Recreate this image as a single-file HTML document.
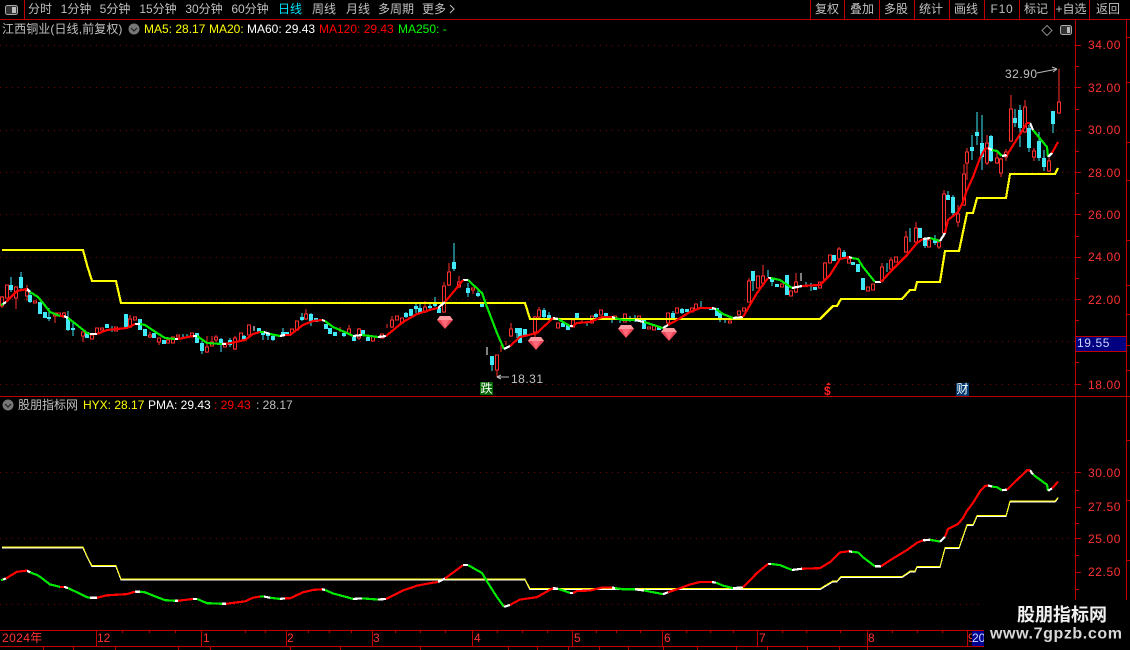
<!DOCTYPE html>
<html><head><meta charset="utf-8"><style>
html,body{margin:0;padding:0;background:#000;width:1130px;height:650px;overflow:hidden}
svg{display:block}
text{font-family:"Liberation Sans","WenQuanYi Zen Hei","Noto Sans CJK SC",sans-serif;font-size:12px;dominant-baseline:central}
.t text{fill:#c0c0c0;text-anchor:middle}
.a text{fill:#ff3333;letter-spacing:.6px;text-anchor:end}
.x text{fill:#ff3333}
.g{stroke:#7a0000;stroke-width:1;stroke-dasharray:1 5;fill:none}
.r{stroke:#ff0000;stroke-width:2.2;fill:none}.gn{stroke:#00e800;stroke-width:2.2;fill:none}.w{stroke:#fff;stroke-width:2.2;fill:none}
</style></head><body>
<svg width="1130" height="650" viewBox="0 0 1130 650" xmlns="http://www.w3.org/2000/svg">
<rect width="1130" height="650" fill="#000"/>
<!-- frame -->
<g stroke="#c00000" stroke-width="1" fill="none" shape-rendering="crispEdges">
<path d="M0 19.5H1130M0 396.5H1130M0 630.5H984M0 646.5H984M24.5 0V19M1075.5 19V600M1126.5 19V600"/>
<path d="M810.5 0V19M844.5 0V19M879.5 0V19M914.5 0V19M949.5 0V19M984.5 0V19M1019.5 0V19M1054.5 0V19M1089.5 0V19"/>
<path d="M1076 45.5h5M1076 87.5h5M1076 130.5h5M1076 172.5h5M1076 214.5h5M1076 257.5h5M1076 299.5h5M1076 384.5h5M1076 66.5h3M1076 109.5h3M1076 151.5h3M1076 193.5h3M1076 236.5h3M1076 278.5h3M1076 320.5h3M1076 362.5h3M1076 472.5h5M1076 507.5h5M1076 538.5h5M1076 572.5h5M1076 490.5h3M1076 523.5h3M1076 555.5h3M1076 589.5h3"/>
<path d="M1126 37.5h4M1126 82.5h4M1126 142.5h4M1126 180.5h4M1126 240.5h4M1126 285.5h4M1126 314.5h4M1126 345.5h4M1126 370.5h4M1126 440.5h4M1126 500.5h4M1126 560.5h4"/>
<path d="M96.5 630V646M201.5 630V646M286.5 630V646M372.5 630V646M472.5 630V646M572.5 630V646M662.5 630V646M757.5 630V646M867.5 630V646M967.5 630V646"/>
<path d="M122.5 630v3M149.5 630v3M175.5 630v3M245.5 630v3M265.5 630v3M308.5 630v3M329.5 630v3M351.5 630v3M395.5 630v3M420.5 630v3M445.5 630v3M497.5 630v3M522.5 630v3M547.5 630v3M596.5 630v3M616.5 630v3M640.5 630v3M686.5 630v3M710.5 630v3M733.5 630v3M782.5 630v3M806.5 630v3M840.5 630v3M892.5 630v3M917.5 630v3M942.5 630v3"/>
<path d="M43.5 646v4M73.5 646v4M115.5 646v4M178.5 646v4M210.5 646v4M290.5 646v4M340.5 646v4M420.5 646v4M508.5 646v4M537.5 646v4M568.5 646v4M599.5 646v4M628.5 646v4M663.5 646v4M697.5 646v4M736.5 646v4M767.5 646v4M807.5 646v4M839.5 646v4M867.5 646v4"/>
</g>
<!-- grid -->
<path class="g" shape-rendering="crispEdges" d="M0 45.5H1075M0 87.5H1075M0 130.5H1075M0 172.5H1075M0 214.5H1075M0 257.5H1075M0 299.5H1075M0 341.5H1075M0 384.5H1075M0 472.5H1075M0 538.5H1075M0 604.5H984"/>
<!-- toolbar -->
<rect x="5.5" y="5.5" width="12" height="9" rx="2" fill="#333" stroke="#aaa"/><rect x="12" y="7" width="4" height="6" fill="#bbb"/>
<g class="t">
<text x="40" y="9">分时</text><text x="76" y="9">1分钟</text><text x="115" y="9">5分钟</text><text x="158" y="9">15分钟</text><text x="204" y="9">30分钟</text><text x="250" y="9">60分钟</text>
<text x="290" y="9" style="fill:#00e5ff">日线</text><text x="324" y="9">周线</text><text x="358" y="9">月线</text><text x="396" y="9">多周期</text><text x="434" y="9">更多</text>
<text x="827" y="9">复权</text><text x="862" y="9">叠加</text><text x="896" y="9">多股</text><text x="931" y="9">统计</text><text x="966" y="9">画线</text><text x="1002" y="9" style="letter-spacing:.8px">F10</text><text x="1036" y="9">标记</text><text x="1071" y="9">+自选</text><text x="1108" y="9">返回</text>
</g>
<path d="M450 5l4 4-4 4" fill="none" stroke="#c0c0c0"/>
<!-- header main -->
<text x="2" y="29" fill="#c0c0c0" style="letter-spacing:.1px">江西铜业(日线,前复权)</text>
<circle cx="134" cy="29" r="5.5" fill="#777"/><path d="M131 28l3 3 3-3" stroke="#222" stroke-width="1.2" fill="none"/>
<text x="144" y="29" fill="#ffff00">MA5: 28.17</text><text x="209" y="29" fill="#ffff00">MA20:</text>
<text x="247" y="29" fill="#fff">MA60: 29.43</text><text x="319" y="29" fill="#ff0000">MA120: 29.43</text><text x="398" y="29" fill="#00ff00">MA250: -</text>
<path d="M1047 25.5l5 5-5 5-5-5z" fill="none" stroke="#888"/>
<rect x="1060.5" y="25.5" width="11" height="9" rx="2" fill="#333" stroke="#aaa"/><rect x="1067" y="27" width="3" height="6" fill="#bbb"/>
<!-- axis -->
<g class="a">
<text x="1121" y="45">34.00</text><text x="1121" y="88">32.00</text><text x="1121" y="130">30.00</text><text x="1121" y="173">28.00</text><text x="1121" y="215">26.00</text><text x="1121" y="257">24.00</text><text x="1121" y="300">22.00</text><text x="1121" y="385">18.00</text>
<text x="1121" y="473">30.00</text><text x="1121" y="507">27.50</text><text x="1121" y="539">25.00</text><text x="1121" y="572">22.50</text>
</g>
<rect x="1075.5" y="336.5" width="51" height="15" fill="#000080" stroke="#c00000"/>
<text x="1077" y="343" fill="#c8d8ff" style="letter-spacing:.6px">19.55</text>
<!-- candles -->
<g shape-rendering="crispEdges">
<path fill="none" stroke="#ff3030" d="M2 296V308M16 286V309M27 285V301M55 313V323M64 312V318M83 332V342M130 315V328M150 332V338M159 338V345M207 336V353M212 336V346M216 335V342M235 336V350M306 309V320M340 327V332M349 325V333M359 328V340M387 324V328M392 316V328M425 301V313M444 282V313M449 263V286M459 276V288M473 288V294M497 355V377M501 345V352M506 341V345M511 323V337M535 316V340M539 307V318M582 318V323M668 313V326M749 278V302M763 265V284M796 273V293M825 262V279M839 247V260M882 263V282M891 257V270M906 231V253M916 222V243M939 239V249M944 190V234M958 205V227M964 164V206M967 148V180M987 135V165M997 152V164M1001 158V177M1006 149V161M1011 95V142M1025 100V133M1034 148V161M1049 158V172M1059 69V114"/>
<path fill="#000" stroke="#ff3030" d="M.5 297h3v9h-3zM5.500 285h3v13h-3zM14.500 287h3v11h-3zM25.500 291h3v5h-3zM33.500 301h3v2h-3zM53.500 313h3v3h-3zM57.500 313h3v3h-3zM62.500 313h3v4h-3zM81.500 332h3v4h-3zM90.500 335h3v4h-3zM95.500 328h3v6h-3zM100.500 328h3v2h-3zM114.500 327h3v4h-3zM128.500 319h3v8h-3zM133.500 317h3v3h-3zM148.500 335h3v2h-3zM157.500 338h3v4h-3zM166.500 340h3v3h-3zM171.500 337h3v6h-3zM176.500 335h3v2h-3zM190.500 333h3v4h-3zM205.500 347h3v5h-3zM210.500 342h3v4h-3zM214.500 337h3v3h-3zM223.500 343h3v4h-3zM233.500 338h3v11h-3zM239.500 333h3v8h-3zM247.500 325h3v10h-3zM290.500 329h3v4h-3zM295.500 321h3v9h-3zM304.500 314h3v5h-3zM347.500 329h3v4h-3zM357.500 329h3v9h-3zM371.500 337h3v4h-3zM380.500 334h3v4h-3zM390.500 320h3v7h-3zM395.500 316h3v4h-3zM400.500 318h3v5h-3zM423.500 307h3v5h-3zM442.500 286h3v26h-3zM447.500 272h3v13h-3zM457.500 282h3v5h-3zM471.500 288h3v2h-3zM495.500 355h3v15h-3zM509.500 329h3v7h-3zM533.500 317h3v15h-3zM537.500 310h3v7h-3zM556.500 323h3v5h-3zM571.500 320h3v7h-3zM590.500 316h3v7h-3zM599.500 310h3v5h-3zM613.500 316h3v2h-3zM623.500 314h3v8h-3zM637.500 316h3v4h-3zM647.500 327h3v2h-3zM652.500 326h3v4h-3zM666.500 313h3v10h-3zM675.500 308h3v5h-3zM690.500 308h3v4h-3zM694.500 304h3v5h-3zM728.500 321h3v2h-3zM737.500 311h3v4h-3zM742.500 308h3v3h-3zM747.500 281h3v21h-3zM756.500 276h3v12h-3zM761.500 276h3v7h-3zM780.500 284h3v3h-3zM789.500 291h3v5h-3zM794.500 282h3v10h-3zM818.500 282h3v6h-3zM823.500 263h3v16h-3zM828.500 255h3v8h-3zM837.500 249h3v10h-3zM847.500 259h3v4h-3zM866.500 287h3v4h-3zM871.500 284h3v6h-3zM880.500 267h3v14h-3zM889.500 260h3v9h-3zM894.500 257h3v5h-3zM904.500 237h3v15h-3zM914.500 228h3v14h-3zM927.500 240h3v7h-3zM937.500 242h3v5h-3zM942.500 194h3v39h-3zM956.500 214h3v8h-3zM962.500 174h3v31h-3zM965.500 152h3v11h-3zM985.500 143h3v20h-3zM995.500 158h3v5h-3zM999.500 159h3v14h-3zM1004.500 152h3v5h-3zM1009.500 109h3v32h-3zM1023.500 107h3v25h-3zM1032.500 151h3v6h-3zM1047.500 161h3v10h-3zM1057.500 102h3v11h-3z"/>
<path fill="none" stroke="#40e8f8" d="M11 277V292M21 272V289M30 290V303M49 308V321M68 311V331M73 321V336M112 326V332M183 334V338M187 334V338M202 341V354M221 338V352M230 338V347M244 335V340M263 331V340M268 332V340M273 335V341M283 328V336M302 313V321M311 313V326M344 331V337M406 312V318M416 304V313M420 304V314M430 304V309M435 297V307M454 243V271M468 283V297M478 290V297M492 356V371M517 328V338M544 308V318M549 312V321M587 323V326M596 313V318M612 318V323M620 318V323M630 316V322M635 315V322M673 311V320M682 308V314M701 301V307M720 311V322M725 318V323M753 271V291M768 270V277M772 279V286M806 282V287M811 283V291M844 250V258M887 263V272M910 228V242M925 238V248M935 235V245M948 191V200M953 195V215M972 135V160M977 112V145M982 115V170M991 135V162M1015 109V127M1020 105V147M1029 125V152M1039 132V161M1044 150V171M1053 111V133"/>
<path fill="none" stroke="#40e8f8" stroke-width="4" d="M11 285V290M21 277V288M30 295V302M40 302V314M45 312V318M49 317V319M68 318V330M73 328V330M87 332V338M107 324V328M126 314V327M140 319V330M145 329V336M154 333V338M164 340V344M197 333V343M202 343V351M221 339V345M230 340V345M244 336V339M259 328V333M263 331V335M268 333V336M273 336V340M283 332V335M287 332V336M302 317V320M311 314V321M316 318V322M326 324V329M330 328V334M335 332V336M344 333V336M354 337V341M363 330V335M368 337V341M406 313V317M411 309V316M416 306V309M420 308V313M430 306V308M435 302V306M439 308V313M454 262V269M468 288V293M478 293V296M482 303V307M492 356V365M517 328V333M520 328V343M525 329V335M544 310V317M549 315V320M563 323V327M568 325V330M577 313V320M596 314V317M606 313V316M644 320V329M659 327V330M673 313V318M682 309V313M687 309V312M711 308V310M717 308V316M720 313V320M753 271V281M772 279V282M777 284V287M787 275V295M815 287V290M834 255V261M844 252V257M853 262V265M858 264V272M863 278V290M920 228V238M925 239V246M935 240V243M948 195V200M953 197V213M972 147V151M977 132V136M982 143V157M991 136V161M1015 118V123M1020 110V128M1029 128V148M1039 141V158M1044 158V167M1053 111V124"/>
<path fill="none" stroke="#fff" d="M254 326V331M487 347V355M801 273V281"/>
</g>
<defs>
<g id="ye"><path d="M2 250H83L87 265L92 281H116L121 303H525L530 319H820L833 306H837L841 299H902L910 290H915L917 282H940L945 251H959L963 232L967 213H973L977 198H1006L1010 174H1025H1055L1058 168" fill="none" vector-effect="non-scaling-stroke"/></g>
<g id="ma">
<path class="gn" vector-effect="non-scaling-stroke" d="M1 305L3 304M30 292L38 297L43 303L50 312L60 316M68 318L77 325L87 333L90 334M140 324L145 325L157 333L165 338L175 339M197 336L207 343L222 344M260 332L264 332M270 334L280 336M325 321L333 327L347 333L353 336M362 335L378 337M468 280L482 293L487 307L497 333L504 349M558 319L570 326M615 318L623 320L635 320M644 322L663 328M716 309L723 314L733 318M771 278L780 280L792 288M852 258L858 259L863 267L875 282M930 238L940 241M992 150L997 151L1002 156M1033 130L1047 147L1048 157"/>
<path class="w" vector-effect="non-scaling-stroke" d="M3 304L6 302M27 289L30 292M64 316L68 318M90 334L97 334M135 324L140 324M175 339L178 339M193 336L197 336M222 344L226 344M264 332L270 334M280 336L285 335M322 320L325 321M353 336L362 335M378 337L386 336M438 308L445 302M463 280L468 280M504 349L510 346M553 318L558 319M570 326L573 326M612 317L615 318M635 320L644 322M663 328L668 325M712 308L716 309M733 318L743 317M768 278L771 278M792 288L802 286M849 257L852 258M875 282L881 282M923 239L930 238M940 241L945 233M988 148L992 150M1002 156L1007 155M1030 123L1033 130M1048 157L1052 153"/>
<path class="r" vector-effect="non-scaling-stroke" d="M6 302L10 298L17 291L27 289M60 316L64 316M97 334L107 330L127 328L135 324M178 339L193 336M226 344L245 340L253 334L260 332M285 335L290 335L303 325L313 321L322 320M386 336L403 322L417 314L433 309L438 308M445 302L455 290L463 280M510 346L520 337L537 333L553 318M573 326L577 323L590 322L602 317L612 317M668 325L677 320L690 312L700 308L712 308M743 317L757 293L768 278M802 286L820 285L830 275L840 259L849 257M881 282L892 270L907 255L917 243L923 239M945 233L948 220L958 212L963 202L967 190L973 177L980 158L985 149L988 148M1007 155L1027 123L1030 123M1052 153L1058 142"/>
</g>
</defs>
<use href="#ye" stroke="#ffff00" stroke-width="2.2" shape-rendering="crispEdges"/>
<use href="#ma" shape-rendering="crispEdges"/>
<!-- lower pane -->
<g transform="translate(0,397) scale(1,.604)" shape-rendering="crispEdges">
<use href="#ye" stroke="#ffffff" stroke-width="1"/>
</g>
<g transform="translate(0,396) scale(1,.604)" shape-rendering="crispEdges">
<use href="#ye" stroke="#ffff00" stroke-width="1"/>
</g>
<g transform="translate(0,396) scale(1,.604)" shape-rendering="crispEdges"><use href="#ma"/></g>
<text x="18" y="405" fill="#c0c0c0">股朋指标网</text>
<circle cx="8" cy="405" r="5.5" fill="#777"/><path d="M5 404l3 3 3-3" stroke="#222" stroke-width="1.2" fill="none"/>
<text x="83" y="405" fill="#ffff00">HYX: 28.17</text><text x="148" y="405" fill="#fff">PMA: 29.43</text><text x="214" y="405" fill="#ff0000">: 29.43</text><text x="256" y="405" fill="#c0c0c0">: 28.17</text>
<!-- gems -->
<g>
<path d="M440 316h10l3 4-8 9-8-9z" fill="#e84858"/><path d="M440 316h10l3 4h-16z" fill="#ff9aa0"/><path d="M441 320h8l-4 8z" fill="#ff6878"/>
<path d="M531 337h10l3 4-8 9-8-9z" fill="#e84858"/><path d="M531 337h10l3 4h-16z" fill="#ff9aa0"/><path d="M532 341h8l-4 8z" fill="#ff6878"/>
<path d="M621 325h10l3 4-8 9-8-9z" fill="#e84858"/><path d="M621 325h10l3 4h-16z" fill="#ff9aa0"/><path d="M622 329h8l-4 8z" fill="#ff6878"/>
<path d="M664 328h10l3 4-8 9-8-9z" fill="#e84858"/><path d="M664 328h10l3 4h-16z" fill="#ff9aa0"/><path d="M665 332h8l-4 8z" fill="#ff6878"/>
</g>
<!-- annotations -->
<rect x="480" y="382" width="13" height="13" fill="#006400"/><text x="480.500" y="388.500" fill="#fff">跌</text>
<text x="824" y="391" fill="#ff2020" style="font-size:12px;font-weight:bold">$</text><path d="M826 385l2.500-2.500 2.500 2.500z" fill="#ff2020"/>
<rect x="956" y="383" width="13" height="13" fill="#003a70"/><text x="956.500" y="389" fill="#fff">财</text>
<path d="M497 377h12M497 377l4-2M497 377l4 2" stroke="#bbb" fill="none"/><text x="511" y="379" fill="#c0c0c0" style="letter-spacing:.5px">18.31</text>
<text x="1005" y="74" fill="#c0c0c0" style="letter-spacing:.5px">32.90</text><path d="M1037 73L1057 69M1057 69l-5-2M1057 69l-4 3" stroke="#bbb" fill="none"/>
<!-- time axis -->
<g class="x">
<text x="2" y="638" style="letter-spacing:.4px">2024年</text><text x="97" y="638">12</text><text x="203" y="638">1</text><text x="287" y="638">2</text><text x="373" y="638">3</text><text x="474" y="638">4</text><text x="574" y="638">5</text><text x="664" y="638">6</text><text x="759" y="638">7</text><text x="868" y="638">8</text><text x="968" y="638">9</text>
</g>
<rect x="972" y="631" width="12" height="15" fill="#000090"/><text x="972" y="638" fill="#c8d8ff">20</text>
<!-- watermark -->
<rect x="984" y="600" width="146" height="50" fill="#000"/>
<text x="1017" y="615" fill="#f0f0f0" style="font-size:18px;font-weight:bold">股朋指标网</text>
<text x="990" y="634" fill="#d8d8d8" style="font-size:16px;font-weight:bold;letter-spacing:.6px">www.7gpzb.com</text>
</svg>
</body></html>
